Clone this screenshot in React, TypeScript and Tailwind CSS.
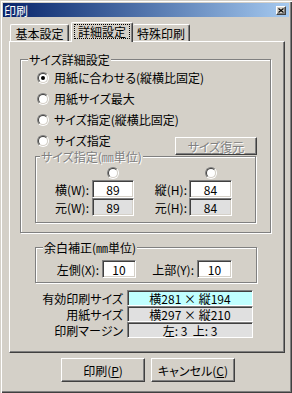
import React from "react";

const face = "bg-[#d4d0c8]";

function Radio({ checked }: { checked?: boolean }) {
  return (
    <span className="w-[12px] h-[12px] rounded-full border border-t-[#808080] border-l-[#808080] border-b-white border-r-white flex items-center justify-center shrink-0">
      <span className="w-[10px] h-[10px] rounded-full border border-t-[#404040] border-l-[#404040] border-b-[#d4d0c8] border-r-[#d4d0c8] bg-white flex items-center justify-center">
        {checked && <span className="w-[4px] h-[4px] rounded-full bg-black" />}
      </span>
    </span>
  );
}

function RadioRow({ label, checked }: { label: string; checked?: boolean }) {
  return (
    <div className="h-[21px] flex items-center pl-[16px] gap-[5px]">
      <Radio checked={checked} />
      <span className="whitespace-nowrap">{label}</span>
    </div>
  );
}

function Input({ value, gray }: { value: string; gray?: boolean }) {
  return (
    <div
      className={`h-[18px] border border-t-[#808080] border-l-[#808080] border-b-white border-r-white shadow-[inset_1px_1px_0_#404040,inset_-1px_-1px_0_#d4d0c8] flex items-center justify-center ${
        gray ? "bg-[#e0e0e0]" : "bg-white"
      }`}
    >
      {value}
    </div>
  );
}

function InfoBox({ value, bg }: { value: string; bg: string }) {
  return (
    <div
      className={`w-[126px] h-[16px] border border-t-[#808080] border-l-[#808080] border-b-white border-r-white shadow-[inset_1px_1px_0_#404040] flex items-center justify-center whitespace-pre ${bg}`}
    >
      {value}
    </div>
  );
}

const groupCls =
  "relative border border-[#808080] shadow-[inset_1px_1px_0_#ffffff,1px_1px_0_#ffffff]";

const btnCls =
  "border border-t-white border-l-white border-b-[#404040] border-r-[#404040] shadow-[inset_-1px_-1px_0_#808080] bg-[#d4d0c8] flex items-center justify-center";

const disabledText = "text-[#808080] [text-shadow:1px_1px_0_#ffffff]";

export default function App() {
  return (
    <div
      className={`w-[292px] h-[393px] ${face} p-[3px] flex flex-col shadow-[inset_1px_1px_0_#d4d0c8,inset_2px_2px_0_#ffffff,inset_-1px_-1px_0_#404040,inset_-2px_-2px_0_#808080] text-[12px] leading-[13px] text-black font-['Noto_Sans_CJK_JP','Noto_Sans',sans-serif] [font-feature-settings:'palt']`}
    >
      {/* Title bar */}
      <div className="h-[14px] flex items-center justify-between bg-linear-to-r from-[#0a246a] to-[#a6caf0] text-white">
        <span className="pl-[1px]">印刷</span>
        <div className={`w-[10px] h-[9px] mr-[3px] ${btnCls} text-black`}>
          <svg width="6" height="5" viewBox="0 0 6 5">
            <path d="M0.5 0.5 L5.5 4.5 M5.5 0.5 L0.5 4.5" stroke="#000" strokeWidth="1.1" />
          </svg>
        </div>
      </div>

      {/* Tabs */}
      <div className="h-[24px] flex items-end pl-[7px]">
        <div className="h-[17px] w-[59px] border-l border-t border-white border-r border-r-[#404040] shadow-[inset_-1px_0_0_#808080] rounded-t-[2px] flex items-center justify-center">
          基本設定
        </div>
        <div className="relative z-10 -mb-px ml-[2px] h-[20px] w-[62px] bg-[#d4d0c8] border-l border-t border-white border-r border-r-[#404040] shadow-[inset_-1px_0_0_#808080] rounded-t-[2px] flex items-start justify-center pt-[1px]">
          <span className="border border-dotted border-black px-[3px] h-[15px] flex items-center">
            詳細設定
          </span>
        </div>
        <div className="h-[17px] w-[57px] border-t border-white border-r border-r-[#404040] shadow-[inset_-1px_0_0_#808080] rounded-t-[2px] flex items-center justify-center">
          特殊印刷
        </div>
      </div>

      {/* Panel */}
      <div className="ml-[6px] w-[276px] h-[312px] border-l border-t border-white border-r border-b border-r-[#404040] border-b-[#404040] shadow-[inset_-1px_-1px_0_#808080] flex flex-col">
        {/* Group 1 */}
        <div className={`${groupCls} ml-[10px] mt-[17px] w-[251px] h-[174px] flex flex-col pt-[7px]`}>
          <span className={`absolute left-[7px] top-[-7px] px-[1px] ${face}`}>サイズ詳細設定</span>
          <RadioRow label="用紙に合わせる(縦横比固定)" checked />
          <RadioRow label="用紙サイズ最大" />
          <RadioRow label="サイズ指定(縦横比固定)" />
          <div className="h-[25px] flex items-start justify-between">
            <div className="h-[21px] flex items-center pl-[16px] gap-[5px]">
              <Radio />
              <span>サイズ指定</span>
            </div>
            <div className={`mt-[7px] mr-[13px] w-[82px] h-[18px] ${btnCls} ${disabledText}`}>
              サイズ復元
            </div>
          </div>

          {/* Inner group */}
          <div className={`${groupCls} ml-[14px] mt-[1px] w-[221px] h-[67px] pt-[10px]`}>
            <span className={`absolute left-[4px] top-[-7px] px-[1px] ${face} ${disabledText}`}>
              サイズ指定(㎜単位)
            </span>
            <div className="grid grid-cols-[56px_42px_19px_36px_43px] grid-rows-[13px_18px_18px]">
              <div />
              <div className="flex justify-center items-start">
                <Radio />
              </div>
              <div />
              <div />
              <div className="flex justify-center items-start">
                <Radio />
              </div>

              <div className="flex items-center justify-end pr-[3px]">横(W):</div>
              <Input value="89" />
              <div />
              <div className="flex items-center justify-end pr-[2px]">縦(H):</div>
              <Input value="84" />

              <div className="flex items-center justify-end pr-[3px]">元(W):</div>
              <Input value="89" gray />
              <div />
              <div className="flex items-center justify-end pr-[2px]">元(H):</div>
              <Input value="84" gray />
            </div>
          </div>
        </div>

        {/* Group 2 */}
        <div className={`${groupCls} ml-[25px] mt-[14px] w-[222px] h-[36px] pt-[12px]`}>
          <span className={`absolute left-[7px] top-[-7px] px-[1px] ${face}`}>余白補正(㎜単位)</span>
          <div className="grid grid-cols-[66px_34px_61px_35px] grid-rows-[18px]">
            <div className="flex items-center justify-end pr-[3px]">左側(X):</div>
            <Input value="10" />
            <div className="flex items-center justify-end pr-[3px]">上部(Y):</div>
            <Input value="10" />
          </div>
        </div>

        {/* Info rows */}
        <div className="mt-[7px] flex flex-col">
          <div className="flex h-[16px]">
            <div className="w-[117px] flex items-center justify-end pr-[4px]">有効印刷サイズ</div>
            <InfoBox value="横281 × 縦194" bg="bg-[#c0ffff]" />
          </div>
          <div className="flex h-[16px]">
            <div className="w-[117px] flex items-center justify-end pr-[4px]">用紙サイズ</div>
            <InfoBox value="横297 × 縦210" bg="bg-[#e0e0e0]" />
          </div>
          <div className="flex h-[16px]">
            <div className="w-[117px] flex items-center justify-end pr-[4px]">印刷マージン</div>
            <InfoBox value="左: 3  上: 3" bg="bg-[#e0e0e0]" />
          </div>
        </div>
      </div>

      {/* Buttons */}
      <div className="mt-[5px] flex gap-[6px] pl-[58px]">
        <div className={`w-[84px] h-[24px] ${btnCls}`}>
          印刷(<span className="underline">P</span>)
        </div>
        <div className={`w-[84px] h-[24px] ${btnCls}`}>
          キャンセル(<span className="underline">C</span>)
        </div>
      </div>
    </div>
  );
}
